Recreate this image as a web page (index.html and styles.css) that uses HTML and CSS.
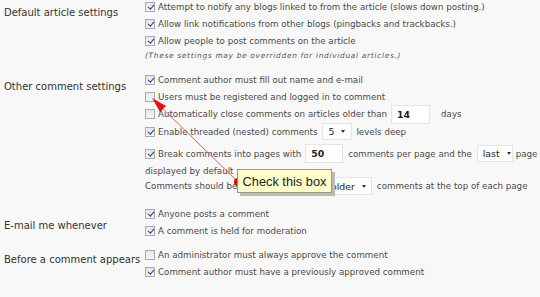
FILE: index.html
```html
<!DOCTYPE html>
<html lang="en">
<head>
  <meta charset="UTF-8" />
  <title>Discussion Settings</title>
  <link rel="stylesheet" href="styles.css">
</head>
<body>

<div class="settings">

  <!-- Default article settings -->
  <div class="section sec-default">
    <div class="label">Default article settings</div>
    <div class="opts">
      <div class="opt"><span class="cb on"></span>Attempt to notify any blogs linked to from the article (slows down posting.)</div>
      <div class="opt"><span class="cb on"></span>Allow link notifications from other blogs (pingbacks and trackbacks.)</div>
      <div class="opt"><span class="cb on"></span>Allow people to post comments on the article</div>
      <div class="note">(These settings may be overridden for individual articles.)</div>
    </div>
  </div>

  <!-- Other comment settings -->
  <div class="section sec-other">
    <div class="label">Other comment settings</div>
    <div class="opts">
      <div class="opt"><span class="cb on"></span>Comment author must fill out name and e-mail</div>
      <div class="opt"><span class="cb"></span>Users must be registered and logged in to comment</div>
      <div class="opt opt-close"><span class="cb"></span>Automatically close comments on articles older than <span class="field f-days">14</span> days</div>
      <div class="opt"><span class="cb on"></span>Enable threaded (nested) comments <span class="select s-depth">5</span> levels deep</div>
      <div class="opt opt-pages"><span class="cb on"></span>Break comments into pages with <span class="field f-per">50</span> comments per page and the <span class="select s-last">last</span> page</div>
      <div class="opt opt-wrap">displayed by default</div>
      <div class="opt opt-order">Comments should be displayed with the <span class="select s-order">older</span> comments at the top of each page</div>
    </div>
  </div>

  <!-- E-mail me whenever -->
  <div class="section sec-email">
    <div class="label">E-mail me whenever</div>
    <div class="opts">
      <div class="opt"><span class="cb on"></span>Anyone posts a comment</div>
      <div class="opt"><span class="cb on"></span>A comment is held for moderation</div>
    </div>
  </div>

  <!-- Before a comment appears -->
  <div class="section sec-before">
    <div class="label">Before a comment appears</div>
    <div class="opts">
      <div class="opt"><span class="cb"></span>An administrator must always approve the comment</div>
      <div class="opt"><span class="cb on"></span>Comment author must have a previously approved comment</div>
    </div>
  </div>

</div>

<!-- annotation -->
<svg class="pointer" width="540" height="297" viewBox="0 0 540 297">
  <line x1="238" y1="182" x2="158" y2="104" stroke="#e0605a" stroke-width="1" />
  <polygon points="152,98 166,106 160,112" fill="#e81010" />
  <circle cx="238" cy="182" r="4" fill="#e80000" />
</svg>
<div class="callout">Check this box</div>

</body>
</html>
```

FILE: styles.css
```css
body {
  margin: 0;
  background: #f8f8f8;
  font-family: "DejaVu Sans", Verdana, sans-serif;
  color: #4a4a4a;
  width: 540px;
  height: 297px;
  overflow: hidden;
}

.settings {
  margin-top: -2px;
  padding-left: 4px;
}

.section {
  display: grid;
  grid-template-columns: 141px 1fr;
}

.label {
  font-size: 10px;
  color: #333;
  line-height: 17px;
  padding-top: 6px;
  white-space: nowrap;
}

.sec-other { margin-top: 9px; }
.sec-other .label { padding-top: 7px; }
.sec-email { margin-top: 11px; }
.sec-email .label { padding-top: 12px; }
.sec-before { margin-top: 7px; }
.sec-before .label { padding-top: 5px; }

.opt {
  display: flex;
  align-items: center;
  height: 17px;
  font-size: 8.7px;
  white-space: nowrap;
}

.opt-close { height: 18px; }
.opt-pages { height: 19px; margin-top: 4px; }
.opt-wrap { height: 15px; }
.opt-order { height: 16px; }

.note {
  font-size: 7.4px;
  font-style: italic;
  letter-spacing: 0.7px;
  color: #555;
  height: 13px;
  line-height: 13px;
  white-space: nowrap;
}

.cb {
  position: relative;
  width: 8px;
  height: 8px;
  border: 1px solid #a5acb8;
  background: linear-gradient(#e4e6ea, #f6f7f9);
  margin-right: 3px;
  flex: none;
}

.cb.on::after {
  content: "";
  position: absolute;
  left: 2.5px;
  top: 0;
  width: 2.5px;
  height: 5px;
  border-right: 1.5px solid #2b3f86;
  border-bottom: 1.5px solid #2b3f86;
  transform: rotate(40deg);
}

.field, .select {
  display: inline-flex;
  align-items: center;
  box-sizing: border-box;
  background: #fff;
  border: 1px solid #e4e4e4;
  color: #222;
  font-size: 9.4px;
  padding-left: 5px;
}

.field {
  height: 19px;
  font-weight: bold;
}

.f-days { width: 39px; margin: 0 11px 0 4px; }
.f-per { width: 38px; margin: 0 5px 0 4px; }

.select {
  height: 17px;
  padding-right: 5px;
}

.select::after {
  content: "";
  margin-left: 7px;
  border-left: 2.5px solid transparent;
  border-right: 2.5px solid transparent;
  border-top: 3px solid #333;
}

.s-depth { width: 30px; margin: 0 4px 0 5px; }
.s-last { width: 36px; margin: 0 3px 0 5px; justify-content: space-between; }
.s-order { margin: 0 5px 0 5px; height: 18px; }

.pointer {
  position: absolute;
  left: 0;
  top: 0;
}

.callout {
  position: absolute;
  left: 237px;
  top: 169px;
  width: 95px;
  height: 24px;
  box-sizing: border-box;
  background: #ffffcc;
  border: 1px solid #9a9a80;
  box-shadow: 3px 3px 0 #bcbcb0;
  font-family: "Liberation Sans", Arial, sans-serif;
  font-size: 12.8px;
  color: #222;
  display: flex;
  align-items: center;
  justify-content: center;
}
```
